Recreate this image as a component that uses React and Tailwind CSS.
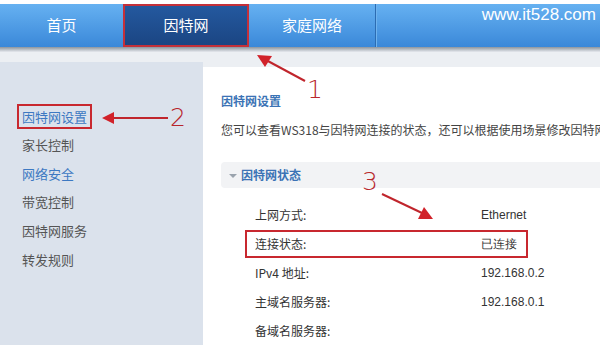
import React from "react";

const cjk = { fontFamily: '"Noto Sans CJK SC", "Liberation Sans", sans-serif' };

function Row({ label, value, boxed }) {
  return (
    <div className="relative flex h-[29px] items-center text-[12px] text-[#333]">
      <div className="w-[260px] shrink-0 pl-[34px]">{label}</div>
      <div className="font-['Liberation_Sans']">{value}</div>
      {boxed && (
        <div className="absolute left-[24px] top-[1px] h-[28px] w-[283px] border-2 border-[#c8282f]" />
      )}
    </div>
  );
}

export default function App() {
  const side = ["因特网设置", "家长控制", "网络安全", "带宽控制", "因特网服务", "转发规则"];
  return (
    <div className="relative h-[345px] w-[600px] overflow-hidden bg-[#eceff3]" style={cjk}>
      <div className="h-[4px] bg-white" />
      <div className="flex h-[43px] bg-gradient-to-b from-[#66b1f1] to-[#3a88d9] text-[15px] text-white">
        <div className="flex w-[123px] shrink-0 items-center justify-center">首页</div>
        <div className="flex w-[126px] shrink-0 items-center justify-center border-2 border-[#c4303a] bg-gradient-to-b from-[#24599f] to-[#1b4583]">
          因特网
        </div>
        <div className="flex w-[126px] shrink-0 items-center justify-center">家庭网络</div>
        <div className="w-[1px] bg-[#2c6cb2]" />
        <div className="w-[1px] bg-[#6fb3ee]" />
        <div className="flex flex-1 justify-end pr-[4px] pt-[1px] font-['Liberation_Sans'] text-[17px] leading-[20px]">
          www.it528.com
        </div>
      </div>
      <div className="h-[5px] bg-gradient-to-b from-[#8c959e] to-[#e6e9ee]" />
      <div className="h-[10px]" />
      <div className="flex h-[283px]">
        <div className="flex w-[203px] shrink-0 flex-col bg-[#dbe2ec] pl-[17px] pt-[40px] text-[13px] text-[#555]">
          {side.map((s, i) => (
            <div key={s} className="flex h-[28.6px] items-center">
              <span
                className={
                  i === 0
                    ? "border-2 border-[#c8282f] px-[3px] py-[1px] text-[#3d79c2]"
                    : i === 2
                    ? "pl-[5px] text-[#3d79c2]"
                    : "pl-[5px]"
                }
              >
                {s}
              </span>
            </div>
          ))}
        </div>
        <div className="min-w-0 flex-1 overflow-hidden pt-[5px]">
          <div className="h-full bg-white pl-[18px]">
            <div className="pt-[25px] text-[12px] font-bold leading-[18px] text-[#3b73b5]">因特网设置</div>
            <div className="mt-[11px] overflow-hidden whitespace-nowrap text-[12px] leading-[18px] text-[#444]">
              您可以查看WS318与因特网连接的状态，还可以根据使用场景修改因特网的
            </div>
            <div className="mt-[23px] flex h-[26px] items-center rounded-l-[4px] bg-[#f2f3f5] pl-[8px]">
              <span className="mr-[4px] mt-[2px] h-0 w-0 border-x-[4px] border-t-[4px] border-x-transparent border-t-[#9aa3ad]" />
              <span className="text-[12px] font-bold text-[#3b73b5]">因特网状态</span>
            </div>
            <div className="pt-[12px]">
              <Row label="上网方式:" value="Ethernet" />
              <Row label="连接状态:" value="已连接" boxed />
              <Row label="IPv4 地址:" value="192.168.0.2" />
              <Row label="主域名服务器:" value="192.168.0.1" />
              <Row label="备域名服务器:" value="" />
            </div>
          </div>
        </div>
      </div>

      {/* annotations */}
      <svg className="absolute left-0 top-0" width="600" height="345" viewBox="0 0 600 345">
        <g stroke="#c0252c" strokeWidth="2" fill="#d1222a">
          <line x1="305" y1="81" x2="266" y2="60" />
          <polygon points="257,55 272,56 265,67" stroke="none" />
          <line x1="168" y1="118" x2="112" y2="118" />
          <polygon points="102,118 114,112 114,124" stroke="none" />
          <line x1="382" y1="194" x2="422" y2="213" />
          <polygon points="433,219 418,219 424,207" stroke="none" />
        </g>
      </svg>
      <div className="absolute left-[307px] top-[76px] font-['DejaVu_Sans'] text-[25px] font-extralight leading-[28px] text-[#b8262c]">1</div>
      <div className="absolute left-[170px] top-[104px] font-['DejaVu_Sans'] text-[25px] font-extralight leading-[28px] text-[#b8262c]">2</div>
      <div className="absolute left-[362px] top-[168px] font-['DejaVu_Sans'] text-[25px] font-extralight leading-[28px] text-[#b8262c]">3</div>
    </div>
  );
}
